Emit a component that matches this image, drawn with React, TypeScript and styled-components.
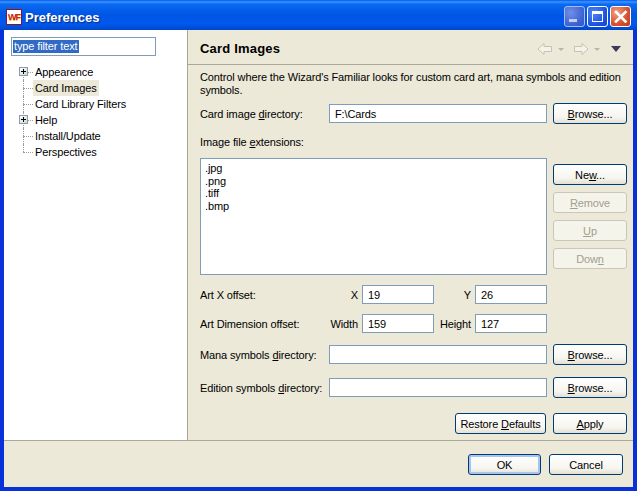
import React from 'react';
import styled, { createGlobalStyle } from 'styled-components';

const GlobalStyle = createGlobalStyle`
html, body {
	margin: 0;
	padding: 0;
	background: #0831d9;
}
body {
	font-family: "Liberation Sans", Tahoma, sans-serif;
	font-size: 11px;
	letter-spacing: -0.12px;
	color: #000;
}
`;

const treeItems = [
	{ label: 'Appearence', expandable: true },
	{ label: 'Card Images', selected: true },
	{ label: 'Card Library Filters' },
	{ label: 'Help', expandable: true },
	{ label: 'Install/Update' },
	{ label: 'Perspectives' },
];

const App = () => {
	return (
		<Window>
			<GlobalStyle />
			<TitleBar>
				<AppIcon>WF</AppIcon>
				<TitleText>Preferences</TitleText>
				<Controls>
					<CaptionButton $tone='disabled'>
						<svg width='21' height='21' viewBox='0 0 21 21'>
							<rect x='5' y='13' width='8' height='3' fill='#c4cdee' />
						</svg>
					</CaptionButton>
					<CaptionButton $tone='blue'>
						<svg width='21' height='21' viewBox='0 0 21 21'>
							<rect x='5.5' y='5.5' width='10' height='10' fill='none' stroke='#fff' />
							<rect x='5' y='5' width='11' height='3' fill='#fff' />
						</svg>
					</CaptionButton>
					<CaptionButton $tone='red'>
						<svg width='21' height='21' viewBox='0 0 21 21'>
							<path d='M6 6 L15.5 15.5 M15.5 6 L6 15.5' stroke='#fff' strokeWidth='2.6' strokeLinecap='square' />
						</svg>
					</CaptionButton>
				</Controls>
			</TitleBar>

			<Client>
				<Main>
					<LeftPanel>
						<FilterBox>
							<FilterSelection>type filter text</FilterSelection>
						</FilterBox>
						<Tree>
							{treeItems.map((item, i) => (
								<TreeRow key={item.label}>
									<Connector $first={i === 0} $last={i === treeItems.length - 1}>
										{item.expandable && <Expander />}
									</Connector>
									<TreeLabel $selected={item.selected}>{item.label}</TreeLabel>
								</TreeRow>
							))}
						</Tree>
					</LeftPanel>

					<RightPanel>
						<PageHeader>
							<PageTitle>Card Images</PageTitle>
							<PageToolbar>
								<svg width='90' height='14' viewBox='0 0 90 14'>
									<path d='M1 7 L7 1.5 V4.5 H14.5 V9.5 H7 V12.5 Z' fill='#f4f3ea' stroke='#c5c3b5' strokeLinejoin='round' />
									<path d='M21 6 h6 l-3 3 Z' fill='#b9b7a8' />
									<path d='M51 7 L45 1.5 V4.5 H37.5 V9.5 H45 V12.5 Z' fill='#f4f3ea' stroke='#c5c3b5' strokeLinejoin='round' />
									<path d='M57 6 h6 l-3 3 Z' fill='#b9b7a8' />
									<path d='M74 4 h10 l-5 6 Z' fill='#3c3a5c' />
								</svg>
							</PageToolbar>
						</PageHeader>

						<PageBody>
							<Description>
								Control where the Wizard's Familiar looks for custom card art, mana symbols and edition symbols.
							</Description>

							<FieldRow $top={6}>
								<FieldLabel>Card image <u>d</u>irectory:</FieldLabel>
								<TextInput>F:\Cards</TextInput>
								<Button $width={74}><u>B</u>rowse...</Button>
							</FieldRow>

							<SectionLabel>Image file <u>e</u>xtensions:</SectionLabel>

							<ListRow>
								<ListBox>
									<div>.jpg</div>
									<div>.png</div>
									<div>.tiff</div>
									<div>.bmp</div>
								</ListBox>
								<ListButtons>
									<Button $width={74}>Ne<u>w</u>...</Button>
									<Button $width={74} disabled><u>R</u>emove</Button>
									<Button $width={74} disabled><u>U</u>p</Button>
									<Button $width={74} disabled>Dow<u>n</u></Button>
								</ListButtons>
							</ListRow>

							<OffsetRow $top={10}>
								<span>Art X offset:</span>
								<OffsetLabel>X</OffsetLabel>
								<TextInput>19</TextInput>
								<OffsetLabel>Y</OffsetLabel>
								<TextInput>26</TextInput>
							</OffsetRow>

							<OffsetRow $top={10}>
								<span>Art Dimension offset:</span>
								<OffsetLabel>Width</OffsetLabel>
								<TextInput>159</TextInput>
								<OffsetLabel>Height</OffsetLabel>
								<TextInput>127</TextInput>
							</OffsetRow>

							<FieldRow $top={11}>
								<FieldLabel>Mana symbols <u>d</u>irectory:</FieldLabel>
								<TextInput />
								<Button $width={74}><u>B</u>rowse...</Button>
							</FieldRow>

							<FieldRow $top={12}>
								<FieldLabel>Edition symbols <u>d</u>irectory:</FieldLabel>
								<TextInput />
								<Button $width={74}><u>B</u>rowse...</Button>
							</FieldRow>

							<PageActions>
								<Button $width={91}>Restore <u>D</u>efaults</Button>
								<Button $width={74}><u>A</u>pply</Button>
							</PageActions>
						</PageBody>
					</RightPanel>
				</Main>

				<Footer>
					<Button $width={73} $isDefault>OK</Button>
					<Button $width={74}>Cancel</Button>
				</Footer>
			</Client>
		</Window>
	);
};

const Window = styled.div`
width: 637px;
height: 491px;
display: flex;
flex-direction: column;
overflow: hidden;
background: #0831d9;
`;

const TitleBar = styled.div`
height: 30px;
flex: none;
display: flex;
align-items: center;
padding: 3px 6px 0;
box-sizing: border-box;
background: linear-gradient(180deg, #0058ee 0%, #3a93ff 6%, #0a6af0 14%, #0055e5 50%, #0058ee 80%, #0047c8 100%);
`;

const AppIcon = styled.div`
width: 14px;
height: 14px;
border: 1px solid #8c1030;
background: #fff;
color: #c8202c;
font-size: 9px;
font-weight: bold;
line-height: 14px;
text-align: center;
letter-spacing: -1px;
text-shadow: 0 1px 0 #e8c820;
overflow: hidden;
`;

const TitleText = styled.div`
margin-left: 3px;
margin-top: 1px;
color: #fff;
font-size: 13px;
font-weight: bold;
letter-spacing: 0;
text-shadow: 1px 1px 1px #0a2a80;
`;

const Controls = styled.div`
margin-left: auto;
display: flex;
gap: 2px;
`;

const toneBackgrounds = {
	disabled: 'radial-gradient(circle at 30% 30%, #6f8fe8, #3c60cf 70%, #3557c4)',
	blue: 'radial-gradient(circle at 30% 30%, #4f85f5, #1a4fdc 70%, #1647cf)',
	red: 'radial-gradient(circle at 30% 30%, #f0a088, #d8502c 60%, #c23c1c)',
};

const CaptionButton = styled.div<{ $tone: keyof typeof toneBackgrounds }>`
width: 21px;
height: 21px;
box-sizing: border-box;
border: 1px solid ${(p) => (p.$tone === 'disabled' ? '#a8bbee' : '#fff')};
border-radius: 3px;
background: ${(p) => toneBackgrounds[p.$tone]};
display: flex;

svg {
	margin: -1px;
	flex: none;
}
`;

const Client = styled.div`
flex: 1;
min-height: 0;
margin: 0 4px 4px;
display: flex;
flex-direction: column;
background: #ece9d8;
`;

const Main = styled.div`
flex: 1;
min-height: 0;
display: flex;
border-bottom: 1px solid #aca899;
`;

const LeftPanel = styled.div`
width: 183px;
flex: none;
box-sizing: border-box;
padding: 7px 0 0 7px;
background: #fff;
`;

const FilterBox = styled.div`
width: 145px;
height: 19px;
box-sizing: border-box;
border: 1px solid #7f9db9;
padding: 2px 1px;
display: flex;
`;

const FilterSelection = styled.span`
height: 13px;
line-height: 13px;
padding: 0 1px;
background: #316ac5;
color: #fff;
white-space: nowrap;
`;

const Tree = styled.div`
margin-top: 8px;
margin-left: 4px;
`;

const TreeRow = styled.div`
height: 16px;
display: flex;
align-items: center;
`;

const Connector = styled.span<{ $first?: boolean; $last?: boolean }>`
position: relative;
width: 18px;
height: 16px;
flex: none;

&::before {
	content: '';
	position: absolute;
	left: 8px;
	top: ${(p) => (p.$first ? '8px' : '0')};
	bottom: ${(p) => (p.$last ? '8px' : '0')};
	border-left: 1px dotted #9a9a9a;
}

&::after {
	content: '';
	position: absolute;
	left: 8px;
	width: 10px;
	top: 8px;
	border-top: 1px dotted #9a9a9a;
}
`;

const Expander = styled.span`
position: absolute;
z-index: 1;
left: 4px;
top: 3px;
width: 9px;
height: 9px;
box-sizing: border-box;
border: 1px solid #7f9db9;
background:
	linear-gradient(#000, #000) center / 5px 1px no-repeat,
	linear-gradient(#000, #000) center / 1px 5px no-repeat,
	linear-gradient(135deg, #fff, #d8d4c4);
`;

const TreeLabel = styled.span<{ $selected?: boolean }>`
height: 16px;
line-height: 16px;
padding: 0 2px;
white-space: nowrap;
background: ${(p) => (p.$selected ? '#ece9d8' : 'transparent')};
`;

const RightPanel = styled.div`
flex: 1;
min-width: 0;
display: flex;
flex-direction: column;
border-left: 1px solid #aca899;
`;

const PageHeader = styled.div`
height: 35px;
flex: none;
box-sizing: border-box;
display: flex;
align-items: center;
padding: 3px 6px 0 12px;
border-bottom: 1px solid #aca899;
`;

const PageTitle = styled.div`
font-size: 13px;
font-weight: bold;
letter-spacing: 0.2px;
`;

const PageToolbar = styled.div`
margin-left: auto;
display: flex;
`;

const PageBody = styled.div`
padding: 6px 6px 0 12px;
`;

const Description = styled.div`
line-height: 13px;
width: 427px;
`;

const FieldRow = styled.div<{ $top: number }>`
margin-top: ${(p) => p.$top}px;
display: flex;
align-items: center;
gap: 6px;
`;

const FieldLabel = styled.span`
width: 123px;
flex: none;
white-space: nowrap;
`;

const TextInput = styled.div`
flex: 1;
min-width: 0;
height: 19px;
box-sizing: border-box;
border: 1px solid #7f9db9;
background: #fff;
padding: 0 5px;
line-height: 18px;
`;

const SectionLabel = styled.div`
margin-top: 12px;
line-height: 13px;
`;

const ListRow = styled.div`
margin-top: 9px;
display: flex;
gap: 6px;
`;

const ListBox = styled.div`
flex: 1;
height: 117px;
box-sizing: border-box;
border: 1px solid #7f9db9;
background: #fff;
padding: 3px 4px;
line-height: 12.7px;
`;

const ListButtons = styled.div`
padding-top: 6px;
display: flex;
flex-direction: column;
gap: 7px;
`;

const OffsetRow = styled.div<{ $top: number }>`
margin-top: ${(p) => p.$top}px;
width: 346px;
display: grid;
grid-template-columns: 129px 33px 72px 41px 72px;
align-items: center;
white-space: nowrap;
`;

const OffsetLabel = styled.span`
text-align: right;
padding-right: 4px;
`;

const PageActions = styled.div`
margin-top: 15px;
display: flex;
justify-content: flex-end;
gap: 7px;
`;

const Button = styled.button<{ $width: number; $isDefault?: boolean }>`
width: ${(p) => p.$width}px;
height: 21px;
flex: none;
box-sizing: border-box;
padding: 0;
border: 1px solid #003c74;
border-radius: 3px;
background: linear-gradient(180deg, #fff 0%, #f6f5ef 70%, #e3e0d3 100%);
box-shadow: ${(p) => (p.$isDefault ? 'inset 0 0 0 2px #a8c4ee' : 'none')};
font: inherit;
letter-spacing: inherit;
color: #000;
text-align: center;

&:disabled {
	border-color: #c9c7ba;
	background: #f5f4ea;
	color: #a19f8f;
}
`;

const Footer = styled.div`
flex: none;
height: 46px;
box-sizing: border-box;
padding: 13px 10px 0 0;
display: flex;
justify-content: flex-end;
gap: 8px;
`;

export default App;
